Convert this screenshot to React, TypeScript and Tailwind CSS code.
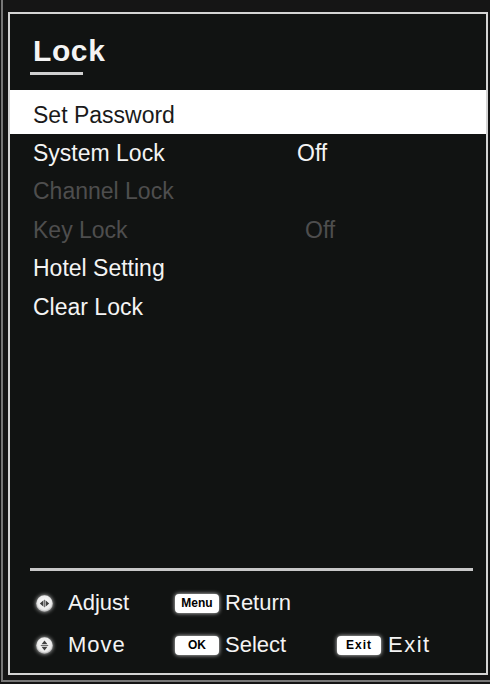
import React from 'react';

const FONT = { fontFamily: '"Liberation Sans", Arial, sans-serif' };

interface Item {
  label: string;
  value?: string;
  valueX?: number;
  disabled?: boolean;
}

const ITEMS: Item[] = [
  { label: 'System Lock', value: 'Off', valueX: 264 },
  { label: 'Channel Lock', disabled: true },
  { label: 'Key Lock', value: 'Off', valueX: 272, disabled: true },
  { label: 'Hotel Setting' },
  { label: 'Clear Lock' },
];

function NavIcon({ kind }: { kind: 'adjust' | 'move' }) {
  return (
    <svg width="17" height="17" viewBox="0 0 16 16" className="shrink-0 -ml-[1px] drop-shadow-[0_0_2px_rgba(255,255,255,0.8)]">
      <defs>
        <radialGradient id={`g-${kind}`} cx="50%" cy="45%" r="55%">
          <stop offset="0%" stopColor="#ffffff" />
          <stop offset="75%" stopColor="#ebebeb" />
          <stop offset="100%" stopColor="#a8a8a8" />
        </radialGradient>
      </defs>
      <circle cx="8" cy="8" r="7.8" fill={`url(#g-${kind})`} />
      {kind === 'adjust' ? (
        <g fill="#404040" stroke="#404040">
          <polygon points="3.6,8 7,5 7,11" strokeWidth="0" />
          <polygon points="12.4,8 9,5 9,11" strokeWidth="0" />
          <line x1="8" y1="4.5" x2="8" y2="11.5" strokeWidth="0.7" />
        </g>
      ) : (
        <g fill="#404040" stroke="#404040">
          <polygon points="8,3.4 5.2,6.8 10.8,6.8" strokeWidth="0" />
          <polygon points="8,12.6 5.2,9.2 10.8,9.2" strokeWidth="0" />
          <line x1="4.5" y1="8" x2="11.5" y2="8" strokeWidth="0.7" />
        </g>
      )}
    </svg>
  );
}

function Key({ text, spaced }: { text: string; spaced?: boolean }) {
  return (
    <span
      className={`w-[44px] h-[19px] shrink-0 rounded-[4px] bg-white text-black font-bold text-[12px] leading-[19px] text-center shadow-[0_0_4px_rgba(255,255,255,0.85)] ${spaced ? 'tracking-[1px]' : ''}`}
    >
      {text}
    </span>
  );
}

export default function App() {
  return (
    <div className="w-[490px] h-[684px] bg-[#151515] pl-[1px] pb-[2px]" style={FONT}>
      <div className="h-full border-l-2 border-b-2 border-[#777] pt-[12px] pl-[5px] pr-[2px] pb-[5px]">
        <div className="h-full flex flex-col border-2 border-[#d4d4d4] bg-[#111312] text-[#f4f4f4]">
          {/* title */}
          <div className="h-[76px] shrink-0 pl-[23px] pt-[22px]">
            <div className="text-[30px] leading-[30px] font-bold tracking-[0.6px]">Lock</div>
            <div className="mt-[6px] -ml-[3px] w-[53px] h-[3px] bg-[#d0d0d0]" />
          </div>

          {/* selected row */}
          <div className="h-[44px] shrink-0 bg-white text-[#1a1a1a] pl-[23px] pt-[13.5px]">
            <div className="text-[23px] leading-[23px]">Set Password</div>
          </div>

          {ITEMS.map(item => (
            <div
              key={item.label}
              className={`h-[38.5px] shrink-0 flex items-center pl-[23px] text-[23px] leading-[23px] ${item.disabled ? 'text-[#4e4e4e]' : ''}`}
            >
              <span className="shrink-0" style={{ width: item.valueX ?? 'auto' }}>{item.label}</span>
              {item.value && <span>{item.value}</span>}
            </div>
          ))}

          <div className="flex-1" />

          {/* legend */}
          <div className="shrink-0 pb-[13px]">
            <div className="ml-[20px] mr-[13px] h-[3px] bg-[#c8c8c8]" />
            <div className="mt-[17px] h-[30px] flex items-center pl-[27px] text-[22px] leading-[22px]">
              <div className="w-[138px] flex items-center gap-[15px]">
                <NavIcon kind="adjust" />
                <span>Adjust</span>
              </div>
              <div className="flex items-center gap-[6px]">
                <Key text="Menu" />
                <span>Return</span>
              </div>
            </div>
            <div className="mt-[12px] h-[30px] flex items-center pl-[27px] text-[22px] leading-[22px]">
              <div className="w-[138px] flex items-center gap-[15px]">
                <NavIcon kind="move" />
                <span className="tracking-[1px]">Move</span>
              </div>
              <div className="w-[162px] flex items-center gap-[6px]">
                <Key text="OK" />
                <span>Select</span>
              </div>
              <div className="flex items-center gap-[7px]">
                <Key text="Exit" spaced />
                <span className="tracking-[1.5px]">Exit</span>
              </div>
            </div>
          </div>
        </div>
      </div>
    </div>
  );
}
